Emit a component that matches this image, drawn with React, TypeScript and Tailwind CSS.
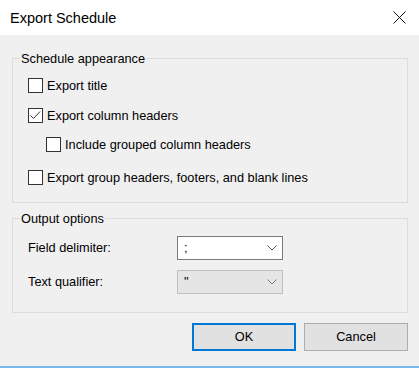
import React from "react";

const font = { fontFamily: '"Liberation Sans", Arial, sans-serif' };

function Box({ checked }: { checked?: boolean }) {
  return (
    <div className="w-[15px] h-[15px] border border-[#333333] bg-white shrink-0 flex items-center justify-center">
      {checked && (
        <svg width="13" height="13" viewBox="0 0 13 13">
          <path d="M1.5 6.5 L4.5 9.5 L11 2.5" fill="none" stroke="#3a3a3a" strokeWidth="1" />
        </svg>
      )}
    </div>
  );
}

function Row({ label, checked, className }: { label: string; checked?: boolean; className: string }) {
  return (
    <div className={"flex items-center h-[15px] " + className}>
      <Box checked={checked} />
      <span className="ml-[4px] leading-[15px] whitespace-nowrap">{label}</span>
    </div>
  );
}

function Chevron({ color }: { color: string }) {
  return (
    <svg width="10" height="6" viewBox="0 0 10 6">
      <path d="M0.5 0.5 L5 5 L9.5 0.5" fill="none" stroke={color} strokeWidth="1" />
    </svg>
  );
}

export default function App() {
  return (
    <div className="w-[419px] h-[368px] flex flex-col bg-[#f0f0f0] text-[12.75px] text-black" style={font}>
      <div className="h-[35px] bg-white flex items-center justify-between pl-[10px] pr-[13px] shrink-0">
        <span className="text-[14.5px] leading-[20px]">Export Schedule</span>
        <svg width="13" height="13" viewBox="0 0 13 13">
          <path d="M0.5 0.5 L12.5 12.5 M12.5 0.5 L0.5 12.5" stroke="#111" strokeWidth="1" />
        </svg>
      </div>
      <div className="flex-1 flex flex-col pt-[15px] pl-[12px] pr-[11px]">
        <fieldset className="border border-[#dcdcdc]">
          <legend className="ml-[7px] px-[1px] leading-[17px]">Schedule appearance</legend>
          <div className="pl-[15px] pt-[11px] pb-[17px]">
            <Row label="Export title" className="" />
            <Row label="Export column headers" checked className="mt-[15px]" />
            <div className="pl-[18px]">
              <Row label="Include grouped column headers" className="mt-[14px]" />
            </div>
            <Row label="Export group headers, footers, and blank lines" className="mt-[18px]" />
          </div>
        </fieldset>
        <fieldset className="mt-[7px] border border-[#dcdcdc]">
          <legend className="ml-[7px] px-[1px] leading-[17px]">Output options</legend>
          <div className="pl-[15px] pt-[9px] pb-[18px]">
            <div className="flex items-center h-[24px]">
              <span className="w-[149px]">Field delimiter:</span>
              <div className="w-[106px] h-[24px] border border-[#7a7a7a] bg-white flex items-center justify-between pl-[6px] pr-[5px]">
                <span>;</span>
                <Chevron color="#606060" />
              </div>
            </div>
            <div className="flex items-center h-[24px] mt-[10px]">
              <span className="w-[149px]">Text qualifier:</span>
              <div className="w-[106px] h-[24px] border border-[#bfbfbf] bg-[#e5e5e5] flex items-center justify-between pl-[6px] pr-[5px]">
                <span>"</span>
                <Chevron color="#7a7a7a" />
              </div>
            </div>
          </div>
        </fieldset>
        <div className="flex justify-end gap-[8px] mt-[10px]">
          <button className="w-[104px] h-[28px] border-2 border-[#0078d7] bg-[#e1e1e1] flex items-center justify-center">OK</button>
          <button className="w-[104px] h-[28px] border border-[#adadad] bg-[#e1e1e1] flex items-center justify-center">Cancel</button>
        </div>
      </div>
      <div className="h-[2px] bg-[#7db8ec] shrink-0" />
    </div>
  );
}
